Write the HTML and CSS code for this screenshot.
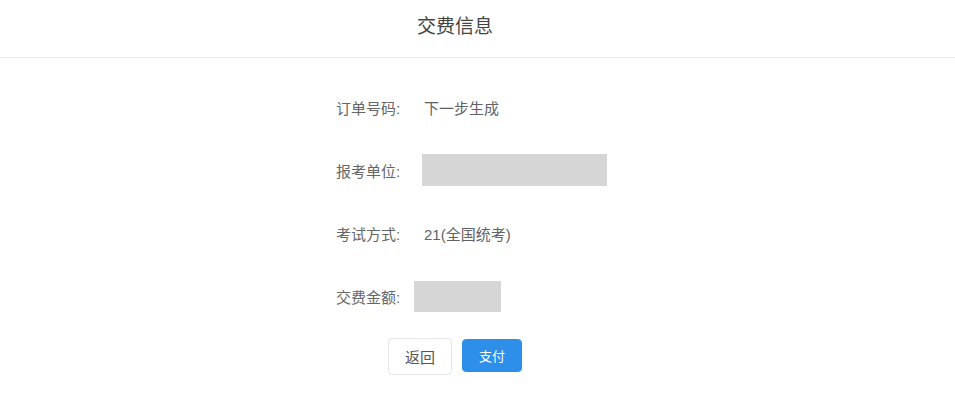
FILE: index.html
```html
<!DOCTYPE html>
<html>

<head>
    <meta charset="utf-8">
    <title>交费信息</title>
    <link rel="stylesheet" href="styles.css">
</head>

<body>
    <div class="wrapper">
        <div class="header">
            <h3 class="title">交费信息</h3>
        </div>
        <div class="section">
            <ul class="form">
                <li class="row">
                    <span class="label">订单号码:</span>
                    <span class="value">下一步生成</span>
                </li>
                <li class="row">
                    <span class="label">报考单位:</span>
                    <span class="mask mask-unit"></span>
                </li>
                <li class="row">
                    <span class="label">考试方式:</span>
                    <span class="value">21(全国统考)</span>
                </li>
                <li class="row">
                    <span class="label">交费金额:</span>
                    <span class="mask mask-money"></span>
                </li>
            </ul>
            <div class="btns">
                <button class="btn btn-back" type="button">返回</button>
                <button class="btn btn-pay" type="button">支付</button>
            </div>
        </div>
    </div>
</body>

</html>
```

FILE: styles.css
```css
html,
body {
    margin: 0;
    padding: 0;
    background: #fff;
}

body {
    font-family: "Liberation Sans", "Noto Sans CJK SC", sans-serif;
    color: #606266;
    font-size: 15px;
}

.wrapper {
    width: 100%;
}

.header {
    height: 57px;
    padding-right: 45px;
    border-bottom: 1px solid #ededed;
    text-align: center;
}

.header .title {
    margin: 0;
    font-weight: normal;
    font-size: 19px;
    line-height: 54px;
    color: #444;
}

.section {
    padding-top: 33px;
    padding-right: 45px;
}

.form {
    list-style: none;
    width: 238px;
    margin: 0 auto;
    padding: 0;
}

.row {
    display: flex;
    align-items: center;
    height: 32px;
    margin-bottom: 31px;
}

.row:last-child {
    margin-bottom: 0;
}

.label {
    width: 88px;
    flex: none;
    color: #666;
}

.value {
    white-space: nowrap;
}

.mask {
    display: block;
    flex: none;
    background: #d6d6d6;
}

.mask-unit {
    width: 185px;
    height: 32px;
    margin-left: -2px;
}

.mask-money {
    width: 87px;
    height: 31px;
    margin-left: -10px;
}

.btns {
    display: flex;
    justify-content: center;
    align-items: flex-start;
    gap: 10px;
    margin-top: 26px;
}

.btn {
    font-family: inherit;
    cursor: pointer;
    border-radius: 4px;
    padding: 0;
}

.btn-back {
    width: 64px;
    height: 37px;
    border: 1px solid #e4e4e4;
    background: #fff;
    color: #555;
    font-size: 15px;
}

.btn-pay {
    width: 60px;
    height: 33px;
    margin-top: 1px;
    border: 1px solid #2d8fe9;
    background: #2d8fe9;
    color: #fff;
    font-size: 13px;
}
```
